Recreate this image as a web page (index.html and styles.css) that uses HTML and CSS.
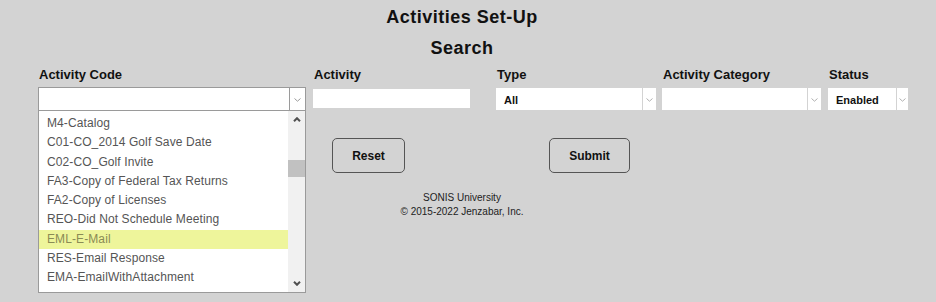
FILE: index.html
```html
<!DOCTYPE html>
<html lang="en">
<head>
    <meta charset="UTF-8">
    <meta name="viewport" content="width=device-width, initial-scale=1.0">
    <title>Activities Set-Up</title>
    <link rel="stylesheet" href="styles.css">
</head>
<body>
    <div class="page">
        <h1>Activities Set-Up</h1>
        <h2>Search</h2>

        <!-- Search filters -->
        <div class="filters">
            <div class="field">
                <label>Activity Code</label>
                <div class="combo">
                    <span class="combo-text"></span>
                    <span class="combo-arrow">
                        <svg width="7" height="4" viewBox="0 0 7 4"><polyline points="0.5,0.5 3.5,3.2 6.5,0.5" fill="none" stroke="#9a9a9a" stroke-width="1"/></svg>
                    </span>
                </div>
                <div class="dropdown">
                    <ul class="options">
                        <li>M4-Catalog</li>
                        <li>C01-CO_2014 Golf Save Date</li>
                        <li>C02-CO_Golf Invite</li>
                        <li>FA3-Copy of Federal Tax Returns</li>
                        <li>FA2-Copy of Licenses</li>
                        <li>REO-Did Not Schedule Meeting</li>
                        <li class="active">EML-E-Mail</li>
                        <li>RES-Email Response</li>
                        <li>EMA-EmailWithAttachment</li>
                    </ul>
                    <div class="scrollbar">
                        <div class="scroll-btn">
                            <svg width="8" height="5" viewBox="0 0 8 5"><polyline points="1,4.2 4,1.2 7,4.2" fill="none" stroke="#505050" stroke-width="2"/></svg>
                        </div>
                        <div class="scroll-track"><div class="scroll-thumb"></div></div>
                        <div class="scroll-btn">
                            <svg width="8" height="5" viewBox="0 0 8 5"><polyline points="1,0.8 4,3.8 7,0.8" fill="none" stroke="#505050" stroke-width="2"/></svg>
                        </div>
                    </div>
                </div>
            </div>

            <div class="field">
                <label>Activity</label>
                <input type="text" class="text-input">
            </div>

            <div class="field">
                <label>Type</label>
                <div class="select type-select">
                    <span class="select-text">All</span>
                    <span class="select-arrow">
                        <svg width="7" height="4" viewBox="0 0 7 4"><polyline points="0.5,0.5 3.5,3.2 6.5,0.5" fill="none" stroke="#b0b0b0" stroke-width="1"/></svg>
                    </span>
                </div>
            </div>

            <div class="field">
                <label>Activity Category</label>
                <div class="select category-select">
                    <span class="select-text"></span>
                    <span class="select-arrow">
                        <svg width="7" height="4" viewBox="0 0 7 4"><polyline points="0.5,0.5 3.5,3.2 6.5,0.5" fill="none" stroke="#b0b0b0" stroke-width="1"/></svg>
                    </span>
                </div>
            </div>

            <div class="field">
                <label>Status</label>
                <div class="select status-select">
                    <span class="select-text">Enabled</span>
                    <span class="select-arrow">
                        <svg width="7" height="4" viewBox="0 0 7 4"><polyline points="0.5,0.5 3.5,3.2 6.5,0.5" fill="none" stroke="#b0b0b0" stroke-width="1"/></svg>
                    </span>
                </div>
            </div>
        </div>

        <div class="actions">
            <button class="btn reset-btn">Reset</button>
            <button class="btn submit-btn">Submit</button>
        </div>

        <footer class="footer">
            <div>SONIS University</div>
            <div>&copy; 2015-2022 Jenzabar, Inc.</div>
        </footer>
    </div>
</body>
</html>
```

FILE: styles.css
```css
body {
    margin: 0;
    background-color: #d3d3d3;
    font-family: 'Liberation Sans', Arial, sans-serif;
    color: #111;
}

.page {
    width: 924px;
    min-height: 296px;
    padding-top: 6px;
}

h1,
h2 {
    margin: 0;
    font-size: 18px;
    line-height: 22px;
    font-weight: bold;
    letter-spacing: 0.5px;
    text-align: center;
}

h2 {
    margin-top: 9px;
}

.filters {
    display: grid;
    grid-template-columns: 275px 183px 166px 166px 80px;
    padding-left: 38px;
    margin-top: 8px;
}

.field {
    position: relative;
    display: flex;
    flex-direction: column;
    align-items: flex-start;
}

.field label {
    font-size: 13px;
    line-height: 16px;
    font-weight: bold;
    margin-bottom: 4px;
    padding-left: 1px;
}

/* Activity Code combo */
.combo {
    display: flex;
    width: 268px;
    height: 24px;
    box-sizing: border-box;
    border: 1px solid #9a9a9a;
    background-color: white;
}

.combo-text {
    flex: 1;
}

.combo-arrow {
    width: 16px;
    border-left: 1px solid #9a9a9a;
    display: flex;
    align-items: center;
    justify-content: center;
    padding-top: 2px;
    box-sizing: border-box;
}

.dropdown {
    position: absolute;
    top: 43px;
    left: 0;
    width: 268px;
    height: 183px;
    box-sizing: border-box;
    border: 1px solid #9a9a9a;
    background-color: white;
    display: flex;
}

.options {
    flex: 1;
    list-style: none;
    margin: 0;
    padding: 3px 0 0;
}

.options li {
    height: 19.25px;
    line-height: 19px;
    font-size: 12px;
    letter-spacing: 0.1px;
    color: #555;
    padding-left: 8px;
    white-space: nowrap;
}

.options li.active {
    background-color: #eef59b;
    color: #8a8b55;
}

.scrollbar {
    width: 17px;
    background-color: #f1f1f1;
    display: flex;
    flex-direction: column;
}

.scroll-btn {
    height: 17px;
    display: flex;
    align-items: center;
    justify-content: center;
}

.scroll-track {
    flex: 1;
}

.scroll-thumb {
    margin-top: 32px;
    height: 17px;
    background-color: #c1c1c1;
}

/* Other inputs */
.text-input {
    width: 157px;
    height: 19px;
    margin: 2px 0 0;
    padding: 0;
    border: none;
    background-color: white;
}

.select {
    display: flex;
    height: 22px;
    margin-top: 1px;
    gap: 1px;
}

.select-text {
    flex: 1;
    background-color: white;
    font-size: 11px;
    font-weight: bold;
    line-height: 24px;
    padding-left: 8px;
}

.select-arrow {
    width: 13px;
    background-color: white;
    display: flex;
    align-items: center;
    justify-content: center;
    padding-top: 1px;
    box-sizing: border-box;
}

.type-select {
    width: 160px;
}

.category-select {
    width: 159px;
}

.status-select {
    width: 80px;
}

.status-select .select-arrow {
    width: 11px;
}

/* Buttons */
.actions {
    display: flex;
    gap: 144px;
    padding-left: 332px;
    margin-top: 27px;
}

.btn {
    height: 35px;
    border: 1px solid #555;
    border-radius: 5px;
    background-color: transparent;
    font-family: 'Liberation Sans', Arial, sans-serif;
    font-size: 12px;
    font-weight: bold;
    color: #111;
    padding: 0;
}

.reset-btn {
    width: 73px;
}

.submit-btn {
    width: 81px;
}

.footer {
    margin-top: 18px;
    font-size: 10px;
    line-height: 14px;
    color: #222;
    text-align: center;
}
```
